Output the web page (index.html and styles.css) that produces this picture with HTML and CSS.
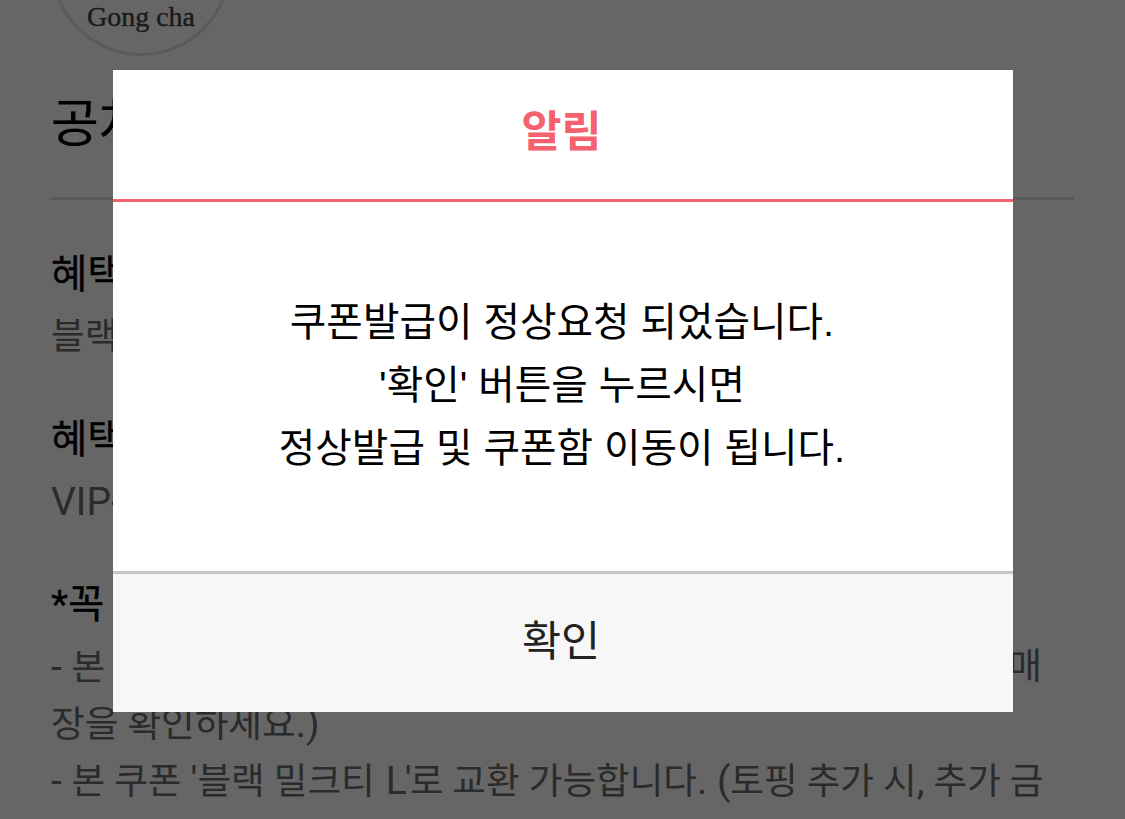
FILE: index.html
```html
<!DOCTYPE html>
<html lang="ko">
<head>
    <meta charset="UTF-8">
    <meta name="viewport" content="width=device-width, initial-scale=1.0">
    <title>알림</title>
    <link rel="stylesheet" href="styles.css">
</head>
<body>
    <div class="page">
        <div class="logo"><span class="logo-name">Gong cha</span></div>
        <h1 class="brand">공차</h1>
        <div class="section">
            <h2>혜택</h2>
            <p>블랙</p>
        </div>
        <div class="section">
            <h2>혜택</h2>
            <p><span class="latin">VIP-</span></p>
        </div>
        <div class="section">
            <h2>*꼭</h2>
            <p class="split"><span><span class="latin">- </span>본</span><span>매</span></p>
            <p>장을 확인하세요<span class="latin">.)</span></p>
            <p><span class="latin">- </span>본 쿠폰 <span class="latin">'</span>블랙 밀크티 <span class="latin size">L'</span>로 교환 가능합니다<span class="latin">. (</span>토핑 추가 시<span class="latin">,</span> 추가 금</p>
        </div>
    </div>

    <div class="overlay">
        <div class="modal">
            <div class="modal-header">알림</div>
            <div class="modal-body">
                쿠폰발급이 정상요청 되었습니다.<br>
                '확인' 버튼을 누르시면<br>
                정상발급 및 쿠폰함 이동이 됩니다.
            </div>
            <button class="modal-button">확인</button>
        </div>
    </div>
</body>
</html>
```

FILE: styles.css
```css
* {
    box-sizing: border-box;
    margin: 0;
    padding: 0;
}

body {
    height: 819px;
    overflow: hidden;
    background-color: #fff;
    font-family: Roboto, "Noto Sans CJK KR", sans-serif;
}

.page {
    height: 819px;
    overflow: hidden;
    padding: 0 51px;
}

.logo {
    display: flex;
    justify-content: center;
    align-items: flex-end;
    width: 180px;
    height: 180px;
    margin-top: -124px;
    padding-bottom: 20px;
    border: 3px solid #e1e1e1;
    border-radius: 50%;
}

.logo-name {
    color: #473f42;
    font-family: "Liberation Serif", serif;
    font-size: 28px;
    line-height: 32px;
    -webkit-text-stroke: 0.4px #473f42;
}

.brand {
    height: 144px;
    padding-top: 31px;
    border-bottom: 3px solid #e1e1e1;
    font-size: 52px;
    font-weight: 400;
    line-height: 76px;
    -webkit-text-stroke: 0.2px #000;
}

.section {
    padding-top: 42px;
}

.section h2 {
    font-size: 39.5px;
    font-weight: 400;
    line-height: 66px;
    -webkit-text-stroke: 0.3px #000;
}

.section p {
    height: 57px;
    color: #6b6b6b;
    font-size: 36.6px;
    line-height: 58px;
    white-space: nowrap;
}

.latin {
    font-size: 39px;
}

.size {
    margin-left: 2px;
    letter-spacing: -2px;
}

.split {
    display: flex;
    justify-content: space-between;
    padding-right: 32px;
}

.overlay {
    position: absolute;
    top: 0;
    left: 0;
    width: 1125px;
    height: 819px;
    padding: 70px 112px 0 113px;
    background-color: rgba(0, 0, 0, 0.6);
}

.modal {
    display: flex;
    flex-direction: column;
    width: 900px;
    height: 642px;
    background-color: #fff;
}

.modal-header {
    height: 132px;
    padding-right: 3px;
    border-bottom: 3px solid #f4616f;
    color: #f4616f;
    font-family: "Noto Sans CJK KR", sans-serif;
    font-size: 43.5px;
    font-weight: 700;
    line-height: 118px;
    text-align: center;
}

.modal-body {
    flex: 1;
    padding: 89px 2px 0 0;
    color: #000;
    font-family: "Liberation Sans", "Noto Sans CJK KR", sans-serif;
    font-size: 39.7px;
    line-height: 63px;
    text-align: center;
}

.modal-button {
    height: 141px;
    padding: 0 4px 11px 0;
    border: 0;
    border-top: 3px solid #c6c6c6;
    background-color: #f7f7f7;
    color: #222;
    font-family: "Noto Sans CJK KR", sans-serif;
    font-size: 42.5px;
}
```
